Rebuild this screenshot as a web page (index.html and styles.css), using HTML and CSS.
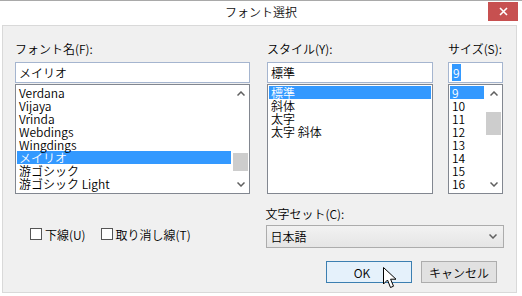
FILE: index.html
```html
<!DOCTYPE html>
<html lang="ja">
<head>
  <meta charset="UTF-8" />
  <title>フォント選択</title>
  <link rel="stylesheet" href="styles.css">
</head>
<body>

  <div class="window">
    <div class="titlebar">
      <span class="title">フォント選択</span>
      <div class="close">
        <svg width="9" height="9" viewBox="0 0 9 9"><path d="M1 1 L8 8 M8 1 L1 8" stroke="#fff" stroke-width="1.6"/></svg>
      </div>
    </div>

    <div class="content">
      <div class="pickers">
        <div class="picker picker-font">
          <span class="label">フォント名(F):</span>
          <div class="field">メイリオ</div>
          <div class="list">
            <ul>
              <li>Verdana</li>
              <li>Vijaya</li>
              <li>Vrinda</li>
              <li>Webdings</li>
              <li>Wingdings</li>
              <li class="selected">メイリオ</li>
              <li>游ゴシック</li>
              <li>游ゴシック Light</li>
            </ul>
            <div class="scrollbar">
              <div class="arrow"><svg width="8" height="5" viewBox="0 0 8 5"><path d="M0.5 4.5 L4 1 L7.5 4.5" fill="none" stroke="#606060" stroke-width="1.5"/></svg></div>
              <div class="track"><div class="thumb thumb-font"></div></div>
              <div class="arrow"><svg width="8" height="5" viewBox="0 0 8 5"><path d="M0.5 0.5 L4 4 L7.5 0.5" fill="none" stroke="#606060" stroke-width="1.5"/></svg></div>
            </div>
          </div>
        </div>

        <div class="picker picker-style">
          <span class="label">スタイル(Y):</span>
          <div class="field">標準</div>
          <div class="list">
            <ul>
              <li class="selected">標準</li>
              <li>斜体</li>
              <li>太字</li>
              <li>太字 斜体</li>
            </ul>
          </div>
        </div>

        <div class="picker picker-size">
          <span class="label">サイズ(S):</span>
          <div class="field"><span class="sel">9</span></div>
          <div class="list">
            <ul>
              <li class="selected">9</li>
              <li>10</li>
              <li>11</li>
              <li>12</li>
              <li>13</li>
              <li>14</li>
              <li>15</li>
              <li>16</li>
            </ul>
            <div class="scrollbar">
              <div class="arrow"><svg width="8" height="5" viewBox="0 0 8 5"><path d="M0.5 4.5 L4 1 L7.5 4.5" fill="none" stroke="#606060" stroke-width="1.5"/></svg></div>
              <div class="track"><div class="thumb thumb-size"></div></div>
              <div class="arrow"><svg width="8" height="5" viewBox="0 0 8 5"><path d="M0.5 0.5 L4 4 L7.5 0.5" fill="none" stroke="#606060" stroke-width="1.5"/></svg></div>
            </div>
          </div>
        </div>
      </div>

      <div class="lower">
        <div class="effects">
          <span class="check"><span class="box"></span>下線(U)</span>
          <span class="check"><span class="box"></span>取り消し線(T)</span>
        </div>

        <div class="charset">
          <span class="label">文字セット(C):</span>
          <div class="combo">
            <span>日本語</span>
            <svg width="8" height="5" viewBox="0 0 8 5"><path d="M0.5 0.5 L4 4 L7.5 0.5" fill="none" stroke="#606060" stroke-width="1.5"/></svg>
          </div>
          <div class="buttons">
            <button class="btn btn-ok">OK</button>
            <button class="btn">キャンセル</button>
          </div>
        </div>
      </div>
    </div>

    <!-- mouse pointer over the OK button -->
    <svg class="cursor" width="14" height="22" viewBox="0 0 14 22">
      <path d="M0.5 0.5 L0.5 17 L4.5 13 L7.5 20.5 L10.5 19.2 L7.6 12.2 L13 12.2 Z" fill="#fff" stroke="#000" stroke-width="1" stroke-linejoin="miter"/>
    </svg>
  </div>

</body>
</html>
```

FILE: styles.css
```css
* { box-sizing: border-box; margin: 0; padding: 0; }
body {
  width: 522px; height: 296px; overflow: hidden; background: #fff;
  font-family: "Noto Sans CJK JP", "Noto Sans", sans-serif; font-size: 12px; font-weight: 350; color: #000;
}

.window {
  position: relative; width: 522px; height: 296px;
  border-top: 1px solid #a9a9a9; background: #fff;
  display: flex; flex-direction: column;
}

.titlebar { height: 24px; display: grid; grid-template-columns: 1fr auto 1fr; }
.title { grid-column: 2; line-height: 22px; font-size: 12px; color: #111; }
.close {
  grid-column: 3; justify-self: end; width: 30px; height: 19px; margin: 1px 4px 0 0;
  background: #c75050; display: flex; align-items: center; justify-content: center;
}

.content {
  flex: 1; margin: 0 5px 3px 2px; border: 1px solid #d9d9d9; background: #f0f0f0;
  padding: 16px 12px 0 12px;
}

.pickers { display: flex; }
.picker-font { width: 235px; }
.picker-style { width: 166px; margin-left: 17px; }
.picker-size { width: 55px; margin-left: 15px; }

.label { display: block; height: 14px; line-height: 14px; margin-bottom: 6px; white-space: nowrap; }

.field {
  height: 21px; border: 1px solid #a5b5cf; background: #fff;
  padding: 0 3px; line-height: 19px; white-space: nowrap;
}
.field .sel { background: #3399ff; color: #fff; padding: 0 1px; }

.list {
  display: flex; height: 110px; margin-top: 1px;
  border: 1px solid #828790; background: #fff;
}
.list ul { flex: 1; list-style: none; padding: 1px 1px 0 1px; overflow: hidden; }
.list li { height: 13px; line-height: 13px; padding-left: 2px; white-space: nowrap; }
.list li.selected { background: #3399ff; color: #fff; }

.scrollbar { width: 17px; display: flex; flex-direction: column; background: #fff; }
.arrow { height: 17px; display: flex; align-items: center; justify-content: center; }
.track { flex: 1; }
.thumb { width: 15px; margin-left: 1px; background: #cdcdcd; }
.thumb-font { height: 18px; margin-top: 51px; }
.thumb-size { height: 23px; margin-top: 10px; }

.lower { display: flex; margin-top: 13px; }
.effects { width: 251px; display: flex; padding: 19px 0 0 15px; gap: 15px; align-items: flex-start; }
.check { display: flex; align-items: center; gap: 3px; height: 16px; white-space: nowrap; }
.box { width: 12px; height: 12px; border: 1px solid #555; background: #fff; }

.charset { width: 239px; }
.combo {
  height: 23px; margin-top: -2px; border: 1px solid #acacac;
  background: linear-gradient(#f2f2f2, #e5e5e5);
  display: flex; align-items: center; justify-content: space-between; padding: 0 6px 0 4px;
}

.buttons { display: flex; justify-content: flex-end; gap: 9px; margin-top: 13px; padding-right: 7px; }
.btn {
  height: 22px; width: 76px; border: 1px solid #adadad; background: #e1e1e1;
  font-family: inherit; font-size: 12px; font-weight: inherit; color: #000;
}
.btn-ok { width: 86px; border-color: #3c7fb1; background: #e5f1fb; padding-right: 14px; }

.cursor { position: absolute; left: 383px; top: 266px; }
```
